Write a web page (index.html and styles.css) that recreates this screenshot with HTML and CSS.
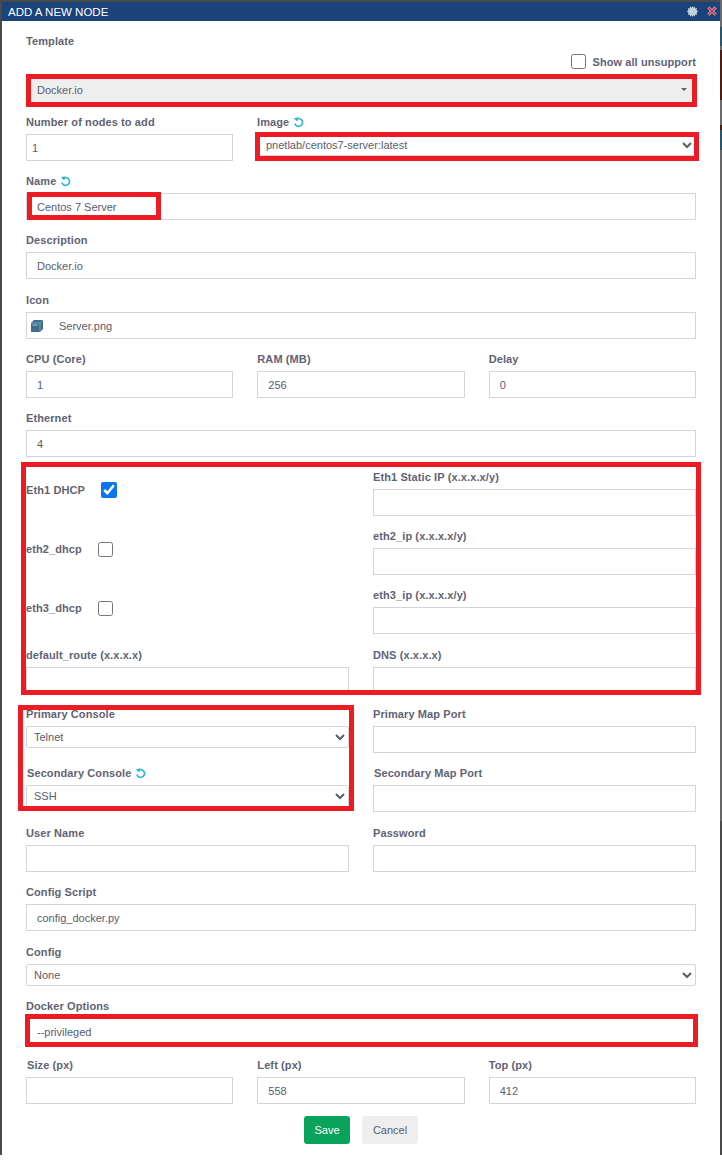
FILE: index.html
```html
<!DOCTYPE html>
<html lang="en">
<head>
<meta charset="utf-8">
<title>Add a new node</title>
<link rel="stylesheet" href="styles.css">
</head>
<body>
<svg class="defs" width="0" height="0" aria-hidden="true">
  <symbol id="refresh" viewBox="0 0 12 12">
    <path d="M4 2.200A4.300 4.300 0 1 1 2 7.200" fill="none" stroke="currentColor" stroke-width="1.700"/>
    <path d="M1 1.600L5.400 0.400 4.800 4.800Z" fill="currentColor"/>
  </symbol>
</svg>
<div class="backdrop">
  <div class="modal">
    <header class="titlebar">
      <span class="title">ADD A NEW NODE</span>
      <span class="tools">
        <svg class="gear" viewBox="0 0 12 12" aria-hidden="true">
          <path d="M6 0l1 2 1.600-1.500.3 2.200 2.100-.5-.6 2.100L12 6l-1.600 1.700.6 2.100-2.100-.5-.3 2.200L7 10l-1 2-1-2-1.600 1.500-.3-2.200-2.100.5.6-2.100L0 6l1.600-1.700L1 2.200l2.100.5.3-2.200L5 2z" fill="#c4d0dc"/>
        </svg>
        <svg class="close" viewBox="0 0 12 12" aria-hidden="true">
          <path d="M1.500 1.500l9 9M10.500 1.500l-9 9" stroke="#e0b8c8" stroke-width="3.400"/>
          <path d="M1.500 1.500l9 9M10.500 1.500l-9 9" stroke="#c0304a" stroke-width="1.800"/>
        </svg>
      </span>
    </header>

    <form class="form">
      <div class="field">
        <label class="label">Template</label>
        <div class="unsupported">
          <input class="check" type="checkbox">
          <span class="label-inline">Show all unsupport</span>
        </div>
        <div class="select2">
          <span>Docker.io</span>
          <span class="caret"></span>
        </div>
      </div>

      <div class="row cols-nodes">
        <div class="field">
          <label class="label">Number of nodes to add</label>
          <input class="input input-tight" type="text" value="1">
        </div>
        <div class="field">
          <label class="label">Image <svg class="refresh"><use href="#refresh"/></svg></label>
          <select class="select select-wide"><option>pnetlab/centos7-server:latest</option></select>
        </div>
      </div>

      <div class="field">
        <label class="label">Name <svg class="refresh"><use href="#refresh"/></svg></label>
        <input class="input" type="text" value="Centos 7 Server">
      </div>

      <div class="field field-extra">
        <label class="label">Description</label>
        <input class="input" type="text" value="Docker.io">
      </div>

      <div class="field">
        <label class="label">Icon</label>
        <div class="input icon-input">
          <svg class="server" viewBox="0 0 12 12" aria-hidden="true">
            <path d="M0 3l3-3h9v9l-3 3H0z" fill="#3f6d8c"/>
            <path d="M9 3v9M0 3h9M9 3l3-3" stroke="#8fb0c6" stroke-width=".7" fill="none"/>
            <path d="M1.500 5h5" stroke="#a9c3d4"/>
          </svg>
          <span>Server.png</span>
        </div>
      </div>

      <div class="row cols-3">
        <div class="field"><label class="label">CPU (Core)</label><input class="input" type="text" value="1"></div>
        <div class="field"><label class="label">RAM (MB)</label><input class="input" type="text" value="256"></div>
        <div class="field"><label class="label">Delay</label><input class="input" type="text" value="0"></div>
      </div>

      <div class="field">
        <label class="label">Ethernet</label>
        <input class="input" type="text" value="4">
      </div>

      <div class="row cols-2">
        <div class="check-field"><label class="label-inline eth1">Eth1 DHCP</label><input class="check" type="checkbox" checked></div>
        <div class="field"><label class="label">Eth1 Static IP (x.x.x.x/y)</label><input class="input" type="text"></div>
      </div>
      <div class="row cols-2">
        <div class="check-field"><label class="label-inline">eth2_dhcp</label><input class="check" type="checkbox"></div>
        <div class="field"><label class="label">eth2_ip (x.x.x.x/y)</label><input class="input" type="text"></div>
      </div>
      <div class="row cols-2 row-extra">
        <div class="check-field"><label class="label-inline">eth3_dhcp</label><input class="check" type="checkbox"></div>
        <div class="field"><label class="label">eth3_ip (x.x.x.x/y)</label><input class="input" type="text"></div>
      </div>
      <div class="row cols-2">
        <div class="field"><label class="label">default_route (x.x.x.x)</label><input class="input" type="text"></div>
        <div class="field"><label class="label">DNS (x.x.x.x)</label><input class="input" type="text"></div>
      </div>

      <div class="row cols-2">
        <div class="field"><label class="label">Primary Console</label><select class="select"><option>Telnet</option></select></div>
        <div class="field"><label class="label">Primary Map Port</label><input class="input" type="text"></div>
      </div>
      <div class="row cols-2 row-extra">
        <div class="field"><label class="label label-nudge">Secondary Console <svg class="refresh"><use href="#refresh"/></svg></label><select class="select"><option>SSH</option></select></div>
        <div class="field"><label class="label label-nudge">Secondary Map Port</label><input class="input" type="text"></div>
      </div>
      <div class="row cols-2">
        <div class="field"><label class="label">User Name</label><input class="input" type="text"></div>
        <div class="field"><label class="label">Password</label><input class="input" type="text"></div>
      </div>

      <div class="field field-extra">
        <label class="label">Config Script</label>
        <input class="input" type="text" value="config_docker.py">
      </div>
      <div class="field">
        <label class="label">Config</label>
        <select class="select"><option>None</option></select>
      </div>
      <div class="field">
        <label class="label">Docker Options</label>
        <input class="input" type="text" value="--privileged">
      </div>

      <div class="row cols-3">
        <div class="field"><label class="label label-nudge">Size (px)</label><input class="input" type="text"></div>
        <div class="field"><label class="label">Left (px)</label><input class="input" type="text" value="558"></div>
        <div class="field"><label class="label">Top (px)</label><input class="input" type="text" value="412"></div>
      </div>

      <div class="actions">
        <button class="btn btn-save" type="button">Save</button>
        <button class="btn btn-cancel" type="button">Cancel</button>
      </div>
    </form>
  </div>

  <div class="mark mark-template"></div>
  <div class="mark mark-image"></div>
  <div class="mark mark-name"></div>
  <div class="mark mark-network"></div>
  <div class="mark mark-console"></div>
  <div class="mark mark-docker"></div>
</div>
</body>
</html>
```

FILE: styles.css
```css
* { box-sizing: border-box; }
html, body { margin: 0; padding: 0; background: #fff; }
body {
  width: 722px;
  height: 1169px;
  overflow: hidden;
  font-family: "Liberation Sans", Arial, sans-serif;
  font-size: 11px;
  color: #595d6e;
}
.defs { position: absolute; }
.backdrop {
  position: relative;
  height: 1155px;
  padding: 2px 2px 0;
  background-color: #4a4a4a;
  background-image: linear-gradient(to bottom,
    #6b6b6b 0, #6b6b6b 27px,
    #27566c 27px, #27566c 46px,
    #6b6b6b 46px, #6b6b6b 50px,
    #4f1c12 50px, #4f1c12 100px,
    #6b6b6b 100px, #6b6b6b 125px,
    #4f1c12 125px, #4f1c12 130px,
    #27566c 130px, #27566c 150px,
    #666 150px, #666 821px,
    #4a4a4a 821px, #4a4a4a 100%);
  background-repeat: no-repeat;
  background-position: right top;
  background-size: 2px 100%;
}
.modal { height: 100%; background: #fff; }
.titlebar {
  height: 19px;
  display: flex;
  align-items: center;
  justify-content: space-between;
  padding: 0 3px 0 6px;
  background: #1a437c;
  color: #fff;
}
.title { font-size: 11.500px; }
.tools { display: flex; align-items: center; gap: 9px; }
.gear { width: 11px; height: 11px; }
.close { width: 10px; height: 10px; margin-top: -2px; }

.form { padding: 10px 24px 0; }
.field { display: flex; flex-direction: column; margin-bottom: 10px; min-width: 0; }
.field-extra { margin-bottom: 11px; }
.row .field { margin-bottom: 0; }
.row { display: grid; column-gap: 24px; margin-bottom: 10px; }
.row-extra { margin-bottom: 11px; }
.cols-3 { grid-template-columns: repeat(3, 1fr); }
.cols-2 { grid-template-columns: repeat(2, 1fr); }
.cols-nodes { grid-template-columns: 207px 1fr; }

.label {
  display: flex;
  align-items: center;
  gap: 4px;
  height: 20px;
  margin-bottom: 2px;
  font-weight: 700;
  color: #5f6374;
  letter-spacing: .1px;
}
.label-nudge { padding-left: 1px; }
.label-inline { font-weight: 700; letter-spacing: .1px; color: #5f6374; }
.refresh { width: 11px; height: 11px; color: #22b8d6; }

.input {
  display: block;
  width: 100%;
  height: 27px;
  padding: 0 10px;
  border: 1px solid #d2d5df;
  border-radius: 0;
  background: #fff;
  font: 11px "Liberation Sans", Arial, sans-serif;
  color: #595d6e;
  outline: 0;
}
.input-tight { padding-left: 5px; }
.icon-input { display: flex; align-items: center; padding-left: 4px; }
.server { width: 12px; height: 12px; margin-right: 16px; }

.select {
  display: block;
  width: 100%;
  height: 22px;
  padding: 0 0 0 3px;
  border: 1px solid #d2d5df;
  border-radius: 2px;
  background-color: #fff;
  font: 11px "Liberation Sans", Arial, sans-serif;
  color: #595d6e;
}
.select-wide { padding-left: 4px; }

.select2 {
  display: flex;
  align-items: center;
  justify-content: space-between;
  height: 25px;
  padding: 0 9px 0 11px;
  background: #eee;
}
.caret {
  width: 0;
  height: 0;
  border-left: 3px solid transparent;
  border-right: 3px solid transparent;
  border-top: 3px solid #595d6e;
}
.unsupported {
  display: flex;
  align-items: center;
  justify-content: flex-end;
  gap: 7px;
  height: 17px;
  margin-bottom: 7px;
}
.unsupported .label-inline { letter-spacing: .08px; }
.check { width: 15px; height: 15px; margin: 0; accent-color: #0a75f5; }

.check-field { display: flex; align-items: center; gap: 16px; height: 46px; }
.eth1 + .check { width: 16px; height: 16px; }

.actions { display: flex; justify-content: center; gap: 12px; margin-top: 12px; }
.btn {
  height: 28px;
  border: 0;
  border-radius: 3px;
  font: 11px "Liberation Sans", Arial, sans-serif;
  padding: 0;
}
.btn-save { width: 46px; background: #0aa35c; color: #fff; }
.btn-cancel { width: 56px; background: #eee; color: #595d6e; }

.mark { position: absolute; border: 5px solid #ed1c24; pointer-events: none; }
.mark-template { left: 26px; top: 74px; width: 671px; height: 33px; }
.mark-image { left: 255px; top: 132px; width: 444px; height: 29px; }
.mark-name { left: 27px; top: 192px; width: 134px; height: 28px; }
.mark-network { left: 21px; top: 462px; width: 680px; height: 233px; }
.mark-console { left: 18px; top: 705px; width: 336px; height: 106px; }
.mark-docker { left: 25px; top: 1014px; width: 673px; height: 33px; }
```
